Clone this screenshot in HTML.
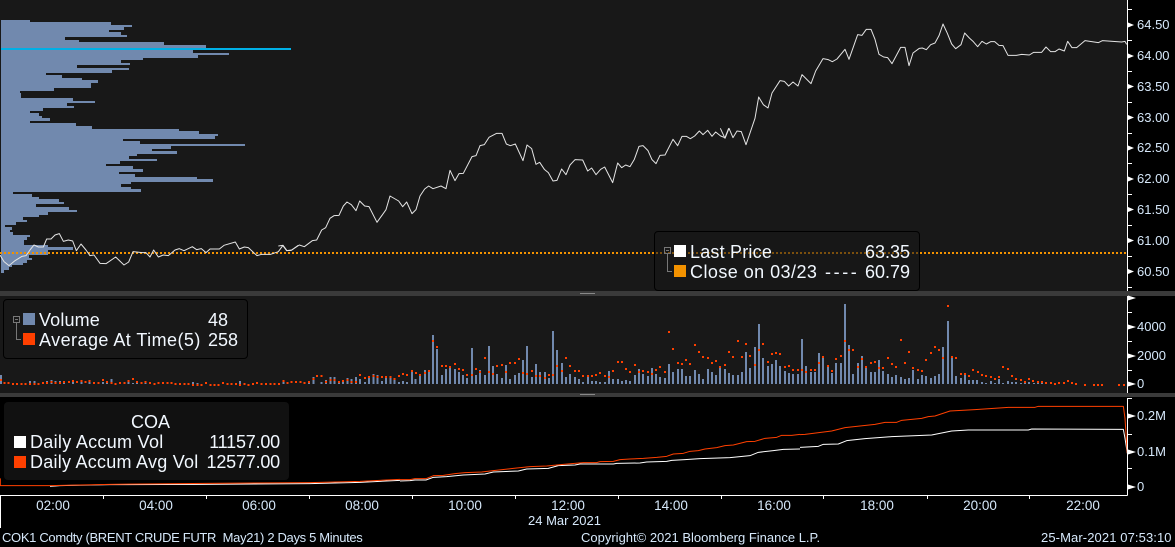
<!DOCTYPE html>
<html><head><meta charset="utf-8">
<style>
html,body{margin:0;padding:0;background:#000;}
#p{position:relative;width:1175px;height:547px;overflow:hidden;background:#000;font-family:"Liberation Sans",sans-serif;}
.b{position:absolute;}
.t{position:absolute;white-space:pre;line-height:20px;font-size:18px;color:#f2f8ff;}
.r{text-align:right;}
.a{position:absolute;white-space:pre;line-height:16px;font-size:13px;color:#d6e8fa;}
.x{position:absolute;white-space:pre;line-height:16px;font-size:13.5px;color:#d6e8fa;width:60px;text-align:center;}
.f{position:absolute;white-space:pre;line-height:16px;font-size:13px;color:#d6e8fa;top:530px;}
.s{position:absolute;width:12px;height:12px;}
svg{position:absolute;left:0;top:0;}
</style></head><body><div id="p">
<div class="b" style="left:0;top:0;width:1127px;height:291px;background:#181818"></div>
<div class="b" style="left:0;top:296px;width:1127px;height:97px;background:#181818"></div>
<div class="b" style="left:0;top:291px;width:1175px;height:5px;background:#3a3a3a"></div>
<div class="b" style="left:0;top:393px;width:1175px;height:4px;background:#3a3a3a"></div>
<div class="b" style="left:580px;top:293px;width:15px;height:1px;background:#888"></div>
<div class="b" style="left:580px;top:394px;width:15px;height:1px;background:#888"></div>

<svg width="1175" height="547" viewBox="0 0 1175 547">
<g transform="scale(.33333)" shape-rendering="crispEdges">
<path fill="#7189ae" d="M3 60H90V66H333V75H396V81H372V90H327V96H363V105H381V111H195V120H237V126H492V135H618V150H579V159H687V165H594V174H429V180H363V189H390V195H231V204H387V210H336V219H138V225H186V234H246V240H294V249H273V264H162V273H60V279H63V294H219V303H285V309H201V318H222V324H129V333H90V339H117V348H126V354H150V363H90V369H228V378H276V387H537V393H597V402H654V408H645V417H369V423H420V432H735V438H513V447H456V453H531V462H411V468H387V477H471V483H360V492H318V498H399V507H429V516H357V522H405V531H591V537H639V546H393V552H363V561H393V567H423V576H39V582H96V591H117V597H177V606H192V612H108V621H207V630H231V636H144V645H117V651H69V660H81V666H48V675H15V681H36V690H30V696H39V705H90V711H81V720H72V735H144V741H219V750H144V765H87V774H96V780H81V789H69V795H36V801H27V810H12V819H3Z"/>
<rect x="3" y="144" width="870" height="6" fill="#00b0e6"/>
</g>
<path d="M0 253H1127" stroke="#f39200" stroke-width="2" stroke-dasharray="2 2" fill="none" shape-rendering="crispEdges"/>
<g fill="none" stroke="#e4e4e4" stroke-width="3" stroke-linejoin="round">
<polyline transform="scale(.33333)" points="0,765 12,785 27,797 45,782 66,769 78,767 90,750 102,735 115,741 130,741 140,717 153,717 165,705 178,701 190,724 205,720 218,723 229,752 243,732 258,750 270,767 282,765 300,790 318,791 347,771 372,795 386,786 399,755 426,758 438,758 450,771 461,750 475,771 490,765 505,767 525,750 538,746 552,752 577,740 590,749 604,746 618,758 630,747 658,747 672,736 706,726 718,747 733,741 745,743 771,767 785,763 812,763 835,755 849,736 861,752 874,751 895,736"/>
<polyline transform="translate(280 0) scale(.33333)" points="-5,738 8,736 20,752 35,750 58,735 73,740 97,722 110,720 125,690 137,683 150,655 162,647 177,646 190,618 201,606 214,614 228,632 239,603 254,618 267,620 291,667 318,629 330,588 356,603 368,620 380,606 396,641 408,629 420,588 434,567 446,558 459,566 483,558 498,566 510,511 525,542 537,521 550,520 576,470 588,467 600,437 613,434 627,412 650,400 666,400 679,432 691,437 706,432 729,482 741,435 755,446 768,493 779,487 793,508 805,518 819,543 831,541 845,507 858,524 870,495 885,479 908,480 923,513 935,504 948,524 962,508 974,501 998,548 1013,489 1025,503 1037,495 1050,500 1063,478 1077,439 1089,437 1104,452 1116,479 1128,491 1140,466 1155,465 1179,418 1193,437 1206,409 1219,409 1231,416 1244,408 1258,393 1269,404 1283,391 1296,409 1307,396 1322,408 1335,413 1346,385"/>
<polyline transform="translate(725 0) scale(.33333)" points="-14,385 0,415 12,385 24,413 36,393 49,395 63,434 90,355 101,291 115,314 129,324 141,279 165,242 178,244 191,258 204,246 219,258 231,224 258,251 272,213 294,176 310,179 322,185 336,177 360,148 372,178 398,104 411,106 424,88 438,88 450,118 462,163 476,171 488,173 501,191 527,142 540,142 552,197 564,159 583,145 592,144 604,149 617,134 630,129 642,107 654,72 667,100 680,132 692,146 708,134 719,99 733,114 745,125 758,140 771,124 784,132 797,125 809,125 822,136 834,137 849,166 874,166 890,163 913,165 926,157 950,157 963,141 977,155 990,155 1002,147 1018,153 1028,124 1041,143 1055,143 1080,122 1120,128 1132,122 1190,126 1200,124 1205,133"/>
</g>

<!-- volume bars -->
<g shape-rendering="crispEdges" fill="none" stroke="#7189ae" stroke-width="6">
<path transform="translate(0 365) scale(.33333)" d="M3 30V57M90 48V57M103 48V57M141 48V57M154 45V57M167 48V57M180 48V57M192 48V57M219 51V57M244 51V57M269 45V57M309 51V57M321 51V57M334 42V57M373 54V57M386 45V57M399 54V57M411 48V57M437 54V57M463 54V57M489 54V57M527 54V57M579 51V57M592 54V57M618 51V57M669 51V57M720 48V57M733 54V57M850 45V57M862 51V57M927 48V57M940 36V57M965 51V57M978 45V57M991 36V57M1003 36V57M1017 48V57M1029 45V57M1042 39V57M1055 42V57M1068 36V57M1080 42V57M1095 51V57M1107 33V57M1120 27V57M1132 30V57M1146 48V57M1158 36V57M1171 33V57M1184 42V57M1197 51V57"/>
<path transform="translate(400 295) scale(.33333)" d="M9 258V267M21 261V267M36 225V267M47 252V267M60 240V267M75 225V267M87 228V267M99 120V267M111 162V267M126 240V267M138 222V267M150 216V267M165 222V267M177 231V267M189 240V267M201 249V267M216 159V267M228 240V267M240 225V267M255 240V267M267 153V267M279 213V267M291 237V267M306 249V267M318 210V267M330 252V267M345 240V267M357 234V267M369 195V267M381 153V267M396 246V267M408 207V267M420 231V267M435 231V267M447 249V267M459 108V267M471 165V267M486 204V267M498 246V267M510 237V267M525 246V267M537 252V267M549 261V267M564 246V267M576 258V267M588 258V267M600 261V267M615 261V267M627 228V267M639 252V267M654 252V267M666 258V267M678 255V267M690 258V267M705 240V267M717 222V267M729 237V267M744 243V267M756 219V267M768 237V267M780 246V267M795 249V267M807 207V267M819 231V267M834 222V267M846 222V267M858 243V267M870 243V267M885 225V267M897 237V267M909 252V267M924 222V267M936 231V267M948 240V267M960 216V267M975 222V267M987 234V267M999 240V267M1014 240V267M1026 231V267M1038 171V267M1050 219V267M1065 156V267M1077 87V267M1089 189V267M1104 213V267M1116 207V267M1128 195V267M1140 213V267M1155 228V267M1167 234V267M1179 237V267M1194 237V267"/>
<path transform="translate(775 295) scale(.33333)" d="M81 132V267M93 213V267M108 231V267M120 231V267M132 174V267M144 183V267M159 216V267M171 234V267M183 204V267M198 204V267M210 27V267M222 150V267M234 237V267M249 204V267M261 183V267M273 219V267M288 231V267M300 231V267M312 195V267M324 228V267M339 237V267M351 246V267M363 240V267M378 246V267M390 252V267M402 249V267M414 225V267M429 252V267M441 240V267M453 243V267M468 249V267M480 243V267M492 237V267M504 156V267M519 78V267M531 183V267M543 243V267M558 249V267M570 240V267M582 255V267M594 255V267M606 255V267M621 261V267M633 264V267M648 258V267M660 264V267M672 252V267M684 264V267M699 258V267M711 261V267M723 261V267M738 264V267M750 258V267M762 261V267M777 264V267M789 261V267M801 261V267M813 264V267M828 264V267"/>
</g>
<!-- average dots -->
<g shape-rendering="crispEdges" fill="none" stroke="#ff4000" stroke-width="6" stroke-linecap="square">
<path transform="translate(0 365) scale(.33333)" d="M3 45h0M13 54h0M26 54h0M39 57h0M51 57h0M64 57h0M77 57h0M90 57h0M103 57h0M116 57h0M129 54h0M141 54h0M154 51h0M167 54h0M180 54h0M192 51h0M207 51h0M219 48h0M231 51h0M244 48h0M257 51h0M269 48h0M282 54h0M296 54h0M309 45h0M321 51h0M334 54h0M347 57h0M360 54h0M373 54h0M386 48h0M399 42h0M411 51h0M425 54h0M437 51h0M450 54h0M463 57h0M476 54h0M489 54h0M502 54h0M515 54h0M527 57h0M540 57h0M553 57h0M566 57h0M579 60h0M592 60h0M605 60h0M618 54h0M631 60h0M643 60h0M656 60h0M669 54h0M682 57h0M695 57h0M708 57h0M720 60h0M733 57h0M746 60h0M759 57h0M771 54h0M785 57h0M798 57h0M811 57h0M824 57h0M837 57h0M850 48h0M862 54h0M875 51h0M888 51h0M901 51h0M914 54h0M927 51h0M940 42h0M951 33h0M965 33h0M978 51h0M991 45h0M1003 45h0M1017 51h0M1029 48h0M1042 45h0M1055 51h0M1068 51h0M1080 30h0M1095 39h0M1107 36h0M1120 33h0M1132 36h0M1146 36h0M1158 36h0M1171 36h0M1184 42h0M1197 33h0"/>
<path transform="translate(400 295) scale(.33333)" d="M9 237h0M21 240h0M36 228h0M48 234h0M60 240h0M75 234h0M87 228h0M99 138h0M111 156h0M126 213h0M138 213h0M150 216h0M165 207h0M177 222h0M189 225h0M201 240h0M216 240h0M228 222h0M240 231h0M255 189h0M267 231h0M279 237h0M291 213h0M306 210h0M318 231h0M330 204h0M345 204h0M357 192h0M369 234h0M381 237h0M396 228h0M408 243h0M420 243h0M435 249h0M447 240h0M459 240h0M471 213h0M486 228h0M498 189h0M510 213h0M525 228h0M537 228h0M549 243h0M564 243h0M576 243h0M588 240h0M600 234h0M615 243h0M627 246h0M639 228h0M654 201h0M666 201h0M678 222h0M690 231h0M705 210h0M717 231h0M729 228h0M744 231h0M756 237h0M768 225h0M780 216h0M795 231h0M807 111h0M819 162h0M834 204h0M846 207h0M858 195h0M870 207h0M885 150h0M897 171h0M909 186h0M924 189h0M936 204h0M948 198h0M960 216h0M975 210h0M987 171h0M999 186h0M1014 138h0M1026 186h0M1038 147h0M1050 183h0M1065 210h0M1077 165h0M1089 147h0M1104 201h0M1116 177h0M1128 174h0M1140 177h0M1155 216h0M1167 213h0M1179 225h0M1194 225h0"/>
<path transform="translate(775 295) scale(.33333)" d="M81 225h0M93 231h0M108 225h0M120 225h0M132 204h0M144 186h0M159 213h0M171 228h0M183 192h0M198 183h0M210 138h0M222 165h0M234 165h0M249 216h0M261 192h0M273 216h0M288 204h0M300 201h0M312 219h0M324 219h0M339 189h0M351 207h0M363 216h0M378 135h0M390 204h0M402 171h0M414 219h0M429 225h0M441 228h0M453 195h0M468 174h0M480 156h0M492 165h0M504 189h0M519 33h0M531 186h0M543 189h0M558 237h0M570 237h0M582 243h0M594 225h0M609 231h0M621 240h0M633 243h0M648 246h0M660 252h0M672 246h0M684 216h0M699 222h0M711 243h0M723 252h0M738 255h0M750 261h0M762 252h0M774 258h0M789 261h0M801 261h0M813 264h0M828 264h0M840 267h0M852 264h0M867 264h0M879 258h0M891 264h0M903 267h0M930 270h0M957 270h0M969 270h0M981 270h0M1032 270h0M1047 270h0"/>
</g>

<!-- bottom lines -->
<g fill="none" stroke-width="3" stroke-linejoin="round">
<g stroke="#fff">
<polyline transform="translate(0 395) scale(.33333)" points="150,274 180,272 330,269 600,268 930,266 1080,262 1200,256"/>
<polyline transform="translate(400 400) scale(.33333)" points="0,243 30,242 45,240 78,240 100,232 140,230 190,225 255,222 280,216 355,213 380,207 445,205 475,197 525,195 540,192 640,192 650,190 720,189 740,186 800,184 815,181 855,179 900,176 990,173 1050,167 1075,157 1120,152 1150,148 1200,147"/>
<polyline transform="translate(775 395) scale(.33333)" points="75,157 130,154 145,148 190,147 215,137 270,131 350,125 470,120 500,114 530,108 580,105 760,105 770,102 1045,103 1050,130 1057,175"/>
</g>
<g stroke="#ff4000">
<polyline transform="translate(0 395) scale(.33333)" points="1,250 1,272 150,272 330,268 620,265 930,263 1080,259 1200,253"/>
<polyline transform="translate(400 400) scale(.33333)" points="0,239 30,239 45,236 78,236 100,227 130,226 165,221 195,218 245,216 280,212 340,205 390,200 440,198 490,193 550,188 590,188 600,185 640,184 660,179 690,177 730,175 770,172 800,169 820,162 850,160 870,154 895,152 915,147 950,143 975,137 1000,135 1040,125 1065,124 1095,115 1130,112 1145,106 1175,106 1200,103"/>
<polyline transform="translate(775 395) scale(.33333)" points="75,119 90,118 170,108 210,98 300,88 330,82 365,82 380,76 440,70 460,65 480,63 525,48 600,44 700,37 780,37 790,34 1045,34 1050,70 1057,175"/>
</g>
</g>

<!-- axes -->
<g shape-rendering="crispEdges" stroke="#fff" fill="none" stroke-width="1">
<path d="M1127.5 0V291M1127.5 296V393M1127.5 398V495.5M0 495.5H1127.5M.5 495V528"/>
<path d="M1128 9.5h4M1128 40.5h4M1128 71.5h4M1128 102.5h4M1128 133.5h4M1128 163.5h4M1128 194.5h4M1128 225.5h4M1128 256.5h4M1128 287.5h4"/>
<path d="M1128 312.5h4M1128 341.5h4M1128 370.5h4M1128 398.5h4M1128 434.5h4M1128 468.5h4"/>
<path d="M103.5 496v3M206.5 496v3M309.5 496v3M412.5 496v3M515.5 496v3M618.5 496v3M721.5 496v3M823.5 496v3M927.5 496v3M1029.5 496v3"/>
</g>
<g fill="#fff">
<path d="M1128 22.5l6 2.5-6 2.5zM1128 53.5l6 2.5-6 2.5zM1128 84l6 2.5-6 2.5zM1128 115l6 2.5-6 2.5zM1128 145.5l6 2.5-6 2.5zM1128 176.5l6 2.5-6 2.5zM1128 207l6 2.5-6 2.5zM1128 238l6 2.5-6 2.5zM1128 269l6 2.5-6 2.5z"/>
<path d="M1128 295.500l8 2.500-8 2.500zM1128 324.500l8 2.500-8 2.500zM1128 353.500l8 2.500-8 2.500zM1128 381.500l8 2.500-8 2.500zM1128 413.500l8 2.500-8 2.500zM1128 449.500l8 2.500-8 2.500zM1128 484.500l8 2.500-8 2.500z"/>
</g>
</svg>

<!-- price legend -->
<div class="b" style="left:654px;top:231px;width:264px;height:58px;border:1px solid #000;border-radius:4px;background:rgba(24,24,24,.55)"></div>
<svg width="1175" height="547" viewBox="0 0 1175 547">
<g fill="none" stroke="#777" shape-rendering="crispEdges">
<rect x="664.500" y="247.500" width="6" height="6"/><path d="M666 250.500h3M667.500 254V271.500H672"/>
</g></svg>
<div class="s" style="left:674px;top:245px;background:#fff"></div>
<div class="s" style="left:674px;top:265px;background:#f39200"></div>
<div class="t" style="left:690px;top:242px;letter-spacing:.2px">Last Price</div>
<div class="t" style="left:690px;top:262px;letter-spacing:.45px">Close on 03/23</div>
<div class="t" style="left:825px;top:262px;letter-spacing:2.6px">----</div>
<div class="t r" style="left:840px;top:242px;width:70px">63.35</div>
<div class="t r" style="left:840px;top:262px;width:70px">60.79</div>

<!-- volume legend -->
<div class="b" style="left:3px;top:299px;width:243px;height:58px;border:1px solid #000;border-radius:4px;background:#181818"></div>
<svg width="1175" height="547" viewBox="0 0 1175 547">
<g fill="none" stroke="#777" shape-rendering="crispEdges">
<rect x="13.500" y="316.500" width="6" height="6"/><path d="M15 319.500h3M16.500 323V339.500H21"/>
</g></svg>
<div class="s" style="left:23px;top:313px;background:#7189ae"></div>
<div class="s" style="left:23px;top:333px;background:#ff4000"></div>
<div class="t" style="left:39px;top:310px;letter-spacing:.15px">Volume</div>
<div class="t" style="left:39px;top:330px;letter-spacing:.45px">Average At Time(5)</div>
<div class="t r" style="left:178px;top:310px;width:50px">48</div>
<div class="t r" style="left:188px;top:330px;width:50px">258</div>

<!-- COA legend -->
<div class="b" style="left:4px;top:402px;width:285px;height:78px;border-radius:4px;background:#111"></div>
<div class="t" style="left:131px;top:412px">COA</div>
<div class="s" style="left:14px;top:436px;background:#fff"></div>
<div class="s" style="left:14px;top:456px;background:#ff4000"></div>
<div class="t" style="left:30px;top:432px;letter-spacing:.3px">Daily Accum Vol</div>
<div class="t" style="left:30px;top:452px;letter-spacing:.25px">Daily Accum Avg Vol</div>
<div class="t r" style="left:180px;top:432px;width:100px;letter-spacing:-.2px">11157.00</div>
<div class="t r" style="left:180px;top:452px;width:100px;letter-spacing:-.2px">12577.00</div>

<!-- y axis labels -->
<div class="a" style="left:1137px;top:17px">64.50</div>
<div class="a" style="left:1137px;top:48px">64.00</div>
<div class="a" style="left:1137px;top:79px">63.50</div>
<div class="a" style="left:1137px;top:110px">63.00</div>
<div class="a" style="left:1137px;top:140px">62.50</div>
<div class="a" style="left:1137px;top:171px">62.00</div>
<div class="a" style="left:1137px;top:202px">61.50</div>
<div class="a" style="left:1137px;top:233px">61.00</div>
<div class="a" style="left:1137px;top:264px">60.50</div>
<div class="a" style="left:1137px;top:319px">4000</div>
<div class="a" style="left:1137px;top:348px">2000</div>
<div class="a" style="left:1137px;top:376px">0</div>
<div class="a" style="left:1137px;top:408px">0.2M</div>
<div class="a" style="left:1137px;top:444px">0.1M</div>
<div class="a" style="left:1137px;top:479px">0</div>

<!-- x axis labels -->
<div class="x" style="left:23px;top:498px">02:00</div>
<div class="x" style="left:126px;top:498px">04:00</div>
<div class="x" style="left:229px;top:498px">06:00</div>
<div class="x" style="left:332px;top:498px">08:00</div>
<div class="x" style="left:435px;top:498px">10:00</div>
<div class="x" style="left:538px;top:498px">12:00</div>
<div class="x" style="left:641px;top:498px">14:00</div>
<div class="x" style="left:744px;top:498px">16:00</div>
<div class="x" style="left:847px;top:498px">18:00</div>
<div class="x" style="left:950px;top:498px">20:00</div>
<div class="x" style="left:1053px;top:498px">22:00</div>
<div class="a" style="left:528px;top:513px">24 Mar 2021</div>

<!-- footer -->
<div class="f" style="left:2px;letter-spacing:-.33px">COK1 Comdty (BRENT CRUDE FUTR  May21) 2 Days 5 Minutes</div>
<div class="f" style="left:581px">Copyright© 2021 Bloomberg Finance L.P.</div>
<div class="f" style="left:1041px;letter-spacing:.1px">25-Mar-2021 07:53:10</div>
</div></body></html>
